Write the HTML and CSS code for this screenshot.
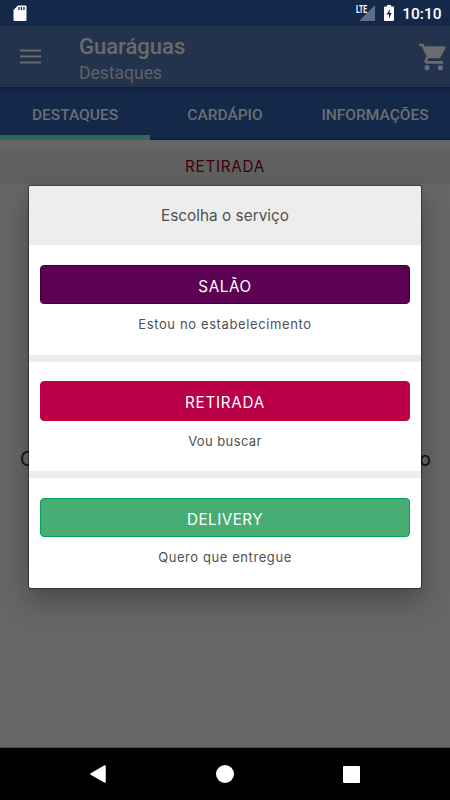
FILE: index.html
```html
<!DOCTYPE html>
<html lang="pt-BR">
<head>
<meta charset="utf-8">
<title>Guaráguas</title>
<link rel="stylesheet" href="styles.css">
</head>
<body>
<div class="screen">
  <div class="status">
    <svg class="sd" viewBox="0 0 14 17"><path d="M5 .5h7.500q1 0 1 1v13.500q0 1-1 1H1.500q-1 0-1-1V5z" fill="#fff"/><path d="M6 2v3M8.500 2v3M11 2v3" stroke="#14284a" stroke-width="1.300"/></svg>
    <div class="indicators">
      <span class="lte">LTE</span>
      <svg class="signal" viewBox="0 0 16 16"><path d="M16 0v16H0z" fill="#5f6d87"/></svg>
      <svg class="battery" viewBox="0 0 10 16"><path d="M3 0h4v1.500h2q1 0 1 1V15q0 1-1 1H1q-1 0-1-1V2.500q0-1 1-1h2z" fill="#fff"/><path d="M6 4 2.500 9.500H5V13.500L7.700 8H5.500z" fill="#14284a"/></svg>
      <span class="clock">10:10</span>
    </div>
  </div>
  <header class="appbar">
    <svg class="menu" viewBox="0 0 21 15"><path d="M0 1.500h21M0 7.500h21M0 13.500h21" stroke="#6b6b6b" stroke-width="2.200"/></svg>
    <div class="titles">
      <div class="title">Guaráguas</div>
      <div class="subtitle">Destaques</div>
    </div>
    <svg class="cart" viewBox="1 2 21 20"><path fill="#6b6b6b" d="M7 18c-1.100 0-1.990.9-1.990 2S5.900 22 7 22s2-.9 2-2-.9-2-2-2zM1 2v2h2l3.600 7.590-1.350 2.450c-.16.280-.25.610-.25.960 0 1.100.9 2 2 2h12v-2H7.420c-.14 0-.25-.11-.25-.25l.03-.12.900-1.630h7.450c.75 0 1.410-.41 1.750-1.030l3.580-6.490c.08-.14.120-.31.120-.48 0-.55-.45-1-1-1H5.210l-.94-2H1zm16 16c-1.100 0-1.990.9-1.990 2s.89 2 1.990 2 2-.9 2-2-.9-2-2-2z"/></svg>
  </header>
  <nav class="tabs">
    <div class="tab active">DESTAQUES</div>
    <div class="tab">CARDÁPIO</div>
    <div class="tab">INFORMAÇÕES</div>
  </nav>
  <main class="content">
    <div class="mode"><span class="caps">RETIRADA</span></div>
    <div class="behind"><span>C</span><span>o</span></div>
    <section class="dialog">
      <h1 class="heading">Escolha o serviço</h1>
      <div class="option">
        <button class="btn salao"><span class="w-salao">SALÃO</span></button>
        <p class="w-estou">Estou no estabelecimento</p>
      </div>
      <div class="option">
        <button class="btn retirada"><span class="caps">RETIRADA</span></button>
        <p class="w-vou">Vou buscar</p>
      </div>
      <div class="option">
        <button class="btn delivery"><span class="w-delivery">DELIVERY</span></button>
        <p class="w-quero">Quero que entregue</p>
      </div>
    </section>
  </main>
  <footer class="navbar">
    <svg class="back" viewBox="0 0 16 18"><path d="M15 1v16L1 9z" fill="#fff" stroke="#fff" stroke-width="1.500" stroke-linejoin="round"/></svg>
    <span class="home"></span>
    <span class="recent"></span>
  </footer>
</div>
</body>
</html>
```
FILE: styles.css
```css
* { box-sizing: border-box; }
body { margin: 0; font-family: Roboto, sans-serif; }
.screen { width: 450px; height: 800px; display: flex; flex-direction: column; overflow: hidden; background: #666; }
.status { height: 26px; flex: none; background: #14284a; display: flex; justify-content: space-between; padding: 5px 8.500px 0 13px; color: #fff; }
.sd { width: 14px; height: 17px; }
.indicators { display: flex; align-items: flex-start; }
.lte { font: 700 10px/9px "Roboto", sans-serif; width: 11px; transform: scaleX(.68); transform-origin: left; margin-right: -8px; position: relative; z-index: 1; }
.signal { width: 16px; height: 16px; margin-right: 9px; }
.battery { width: 10px; height: 16px; margin-right: 8px; }
.clock { font-size: 15.500px; font-weight: 500; line-height: 18px; }
.appbar { height: 61px; flex: none; background: #23334d; display: flex; padding: 0 3px 0 20px; color: #6b6b6b; }
.menu { width: 21px; height: 15px; margin: 23px 38px 0 0; }
.titles { flex: 1; padding-top: 8px; }
.title { font-size: 22px; font-weight: 500; line-height: 26px; }
.subtitle { font-size: 17.500px; line-height: 27px; color: #5e6265; }
.cart { width: 28px; height: 28px; margin-top: 17px; }
.tabs { height: 53px; flex: none; background: linear-gradient(#0f1f3a, #14284a 7px); display: grid; grid-template-columns: 1fr 1fr 1fr; border-bottom: 1px solid #0c1d42; }
.tab { font-size: 15.500px; font-weight: 500; color: #6b6f73; text-align: center; line-height: 56px; height: 53px; white-space: nowrap; }
.tab.active { border-bottom: 5px solid #336660; }
.content { flex: 1; background: #666; position: relative; padding-top: 9px; font-family: Inter, sans-serif; border-bottom: 1px solid #4d4d4d; }
.mode { height: 35px; background: #606060; color: #400008; display: flex; justify-content: center; font-size: 15.200px; line-height: 35px; }
.behind { margin-top: 258px; padding: 0 19px 0 20px; display: flex; justify-content: space-between; font-size: 19.500px; line-height: 34px; color: #111; }
.dialog { position: absolute; top: 46px; left: 29px; width: 392px; height: 401.500px; background: #fff; border-radius: 2px; overflow: hidden; box-shadow: 0 0 1px 1px rgba(0,0,0,.4), 0 12px 26px 2px rgba(0,0,0,.26); }
.heading { margin: 0; height: 59px; background: #ededed; text-align: center; font-size: 15.300px; font-weight: 400; line-height: 60px; letter-spacing: .03px; color: #505050; }
.option { height: 116.500px; padding: 19.500px 11px 0; border-bottom: 7px solid #ededed; text-align: center; }
.option:last-child { border: 0; }
.btn { display: block; width: 100%; height: 39.500px; padding: 4px 0 0; border: 1px solid; border-radius: 4px; color: #fff; font: 400 15.200px/34px Inter, sans-serif; }
.salao { background: #5b0053; border-color: #3b0035; }
.retirada { background: #b90048; border-color: #c0003c; }
.delivery { background: #47ad74; border-color: #07a05a; }
.option p { margin: 9px 0 0; font-size: 13px; line-height: 22px; color: #505050; }
.caps { letter-spacing: .75px; }
.w-salao { letter-spacing: .6px; }
.w-delivery { letter-spacing: .5px; }
.w-estou { letter-spacing: .62px; }
.w-vou { letter-spacing: .4px; }
.w-quero { letter-spacing: .58px; }
.navbar { height: 52px; flex: none; background: #000; display: flex; align-items: center; padding: 0 90px; justify-content: space-between; }
.back { width: 16px; height: 18px; }
.home { width: 18px; height: 18px; border-radius: 50%; background: #fff; }
.recent { width: 17px; height: 17px; background: #fff; border-radius: 1px; }
```
